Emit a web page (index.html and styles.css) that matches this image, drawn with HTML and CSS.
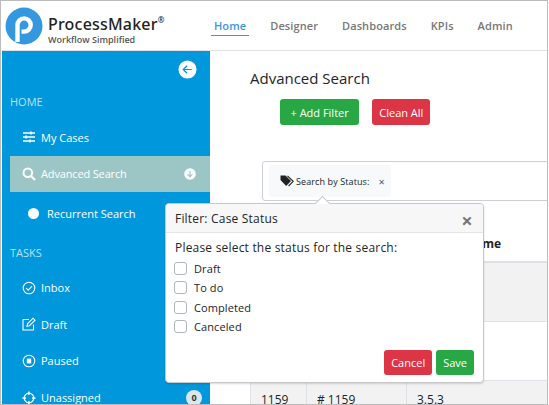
FILE: index.html
```html
<!DOCTYPE html>
<html>
<head>
    <title>Advanced Search</title>
    <link rel="stylesheet" href="styles.css">
</head>
<body>
    <div class="window">
        <header class="topbar">
            <div class="logo">
                <svg class="logo-mark" viewBox="0 0 38 38" width="38" height="38">
                    <circle cx="19" cy="19" r="18.5" fill="#3498e0"/>
                    <path d="M12.5 35 V18 A6.6 6.6 0 1 1 19.1 24.6 H16.5" fill="none" stroke="#fff" stroke-width="4.4"/>
                </svg>
                <div class="logo-text">
                    <div class="logo-name">ProcessMaker<span class="reg">®</span></div>
                    <div class="logo-tag">Workflow Simplified</div>
                </div>
            </div>
            <nav class="nav">
                <a class="nav-link active">Home</a>
                <a class="nav-link">Designer</a>
                <a class="nav-link">Dashboards</a>
                <a class="nav-link">KPIs</a>
                <a class="nav-link">Admin</a>
            </nav>
        </header>
        <div class="content">
            <aside class="sidebar">
                <div class="collapse">
                    <svg viewBox="0 0 20 20" width="19" height="19">
                        <circle cx="10" cy="10" r="9.5" fill="#fff"/>
                        <path d="M14.5 10 H6 M9.5 6 L5.5 10 L9.5 14" fill="none" stroke="#0097dc" stroke-width="1.3"/>
                    </svg>
                </div>
                <div class="side-title first">HOME</div>
                <a class="side-item">
                    <svg class="side-icon" viewBox="0 0 14 14" width="14" height="14">
                        <path d="M1 3 H13 M1 7 H13 M1 11 H13" stroke="#fff" stroke-width="1.3"/>
                        <path d="M9 1.5 V4.5 M4 5.5 V8.5 M8 9.5 V12.5" stroke="#fff" stroke-width="1.6"/>
                    </svg>
                    My Cases
                </a>
                <a class="side-item active">
                    <svg class="side-icon" viewBox="0 0 14 14" width="14" height="14">
                        <circle cx="5.8" cy="5.8" r="4.3" fill="none" stroke="#fff" stroke-width="2"/>
                        <path d="M9 9 L13 13" stroke="#fff" stroke-width="2.2"/>
                    </svg>
                    Advanced Search
                    <svg class="side-arrow" viewBox="0 0 12 12" width="12" height="12">
                        <circle cx="6" cy="6" r="5.8" fill="#fff"/>
                        <path d="M6 3 V8.5 M3.6 6.3 L6 8.7 L8.4 6.3" fill="none" stroke="#9cc6c6" stroke-width="1.1"/>
                    </svg>
                </a>
                <a class="side-item sub">
                    <span class="dot"></span>
                    Recurrent Search
                </a>
                <div class="side-title">TASKS</div>
                <a class="side-item">
                    <svg class="side-icon" viewBox="0 0 14 14" width="14" height="14">
                        <circle cx="7" cy="7" r="5.8" fill="none" stroke="#fff" stroke-width="1.1"/>
                        <path d="M4.2 7.2 L6.2 9.2 L10 5.2" fill="none" stroke="#fff" stroke-width="1.2"/>
                    </svg>
                    Inbox
                </a>
                <a class="side-item">
                    <svg class="side-icon" viewBox="0 0 14 14" width="14" height="14">
                        <path d="M7 2.5 H1 V13 H11.5 V7.5" fill="none" stroke="#fff" stroke-width="1.1"/>
                        <path d="M5 9.2 L5.5 6.8 L11 1.2 L13 3.2 L7.4 8.7 Z" fill="none" stroke="#fff" stroke-width="1.1"/>
                    </svg>
                    Draft
                </a>
                <a class="side-item">
                    <svg class="side-icon" viewBox="0 0 14 14" width="14" height="14">
                        <circle cx="7" cy="7" r="5.8" fill="none" stroke="#fff" stroke-width="1.1"/>
                        <rect x="4.8" y="4.6" width="4.4" height="4.8" fill="#fff"/>
                    </svg>
                    Paused
                </a>
                <a class="side-item">
                    <svg class="side-icon" viewBox="0 0 14 14" width="14" height="14">
                        <circle cx="7" cy="7" r="4.8" fill="none" stroke="#fff" stroke-width="1.3"/>
                        <path d="M7 0.5 V4 M7 10 V13.5 M0.5 7 H4 M10 7 H13.5" stroke="#fff" stroke-width="1.4"/>
                    </svg>
                    Unassigned
                    <span class="badge">0</span>
                </a>
            </aside>
            <main class="main">
                <h1 class="page-title">Advanced Search</h1>
                <div class="actions">
                    <button class="btn green add">+ Add Filter</button>
                    <button class="btn red clean">Clean All</button>
                </div>
                <div class="filter-box">
                    <div class="chip">
                        <svg viewBox="0 0 14 12" width="14" height="12">
                            <path d="M0.5 0.5 H5.5 L11 6 L6.2 11 L0.5 5 Z" fill="#222"/>
                            <path d="M7.5 0.8 L13.2 6.3 L8.6 11" fill="none" stroke="#222" stroke-width="1.1"/>
                        </svg>
                        <span class="chip-label">Search by Status:</span>
                        <span class="chip-x">×</span>
                    </div>
                </div>
                <table class="results">
                    <thead>
                        <tr>
                            <th class="col-a"></th>
                            <th class="col-b"></th>
                            <th>Process Name</th>
                        </tr>
                    </thead>
                    <tbody>
                        <tr class="odd"><td></td><td></td><td></td></tr>
                        <tr><td></td><td></td><td></td></tr>
                        <tr class="odd"><td>1159</td><td># 1159</td><td>3.5.3</td></tr>
                    </tbody>
                </table>
            </main>
        </div>
        <div class="popover">
            <div class="pop-arrow"></div>
            <div class="pop-head">
                <span>Filter: Case Status</span>
                <span class="pop-close">×</span>
            </div>
            <div class="pop-body">
                <p class="pop-text">Please select the status for the search:</p>
                <label class="check"><span class="box"></span>Draft</label>
                <label class="check"><span class="box"></span>To do</label>
                <label class="check"><span class="box"></span>Completed</label>
                <label class="check"><span class="box"></span>Canceled</label>
                <div class="pop-foot">
                    <button class="btn red small">Cancel</button>
                    <button class="btn green small">Save</button>
                </div>
            </div>
        </div>
    </div>
</body>
</html>
```

FILE: styles.css
```css
html, body {
    margin: 0;
    height: 405px;
    overflow: hidden;
    background-color: #fff;
}

body {
    font-family: "Open Sans", "Noto Sans", sans-serif;
    font-size: 11px;
    color: #212529;
}

.window {
    position: relative;
    box-sizing: border-box;
    width: 548px;
    height: 405px;
    border: 1px solid #bcbcbc;
    overflow: hidden;
}

.topbar {
    display: flex;
    height: 49px;
    border-bottom: 1px solid #e1e1e1;
}

.logo {
    display: flex;
    align-items: center;
    gap: 5px;
    width: 209px;
    padding-left: 4px;
    box-sizing: border-box;
}

.logo-mark {
    flex: none;
}

.logo-text {
    margin-top: 8px;
}

.logo-name {
    font-family: "Noto Sans", sans-serif;
    font-size: 16px;
    font-weight: 500;
    line-height: 19px;
    color: #222;
    letter-spacing: 0.2px;
}

.reg {
    display: inline-block;
    font-size: 8px;
    line-height: 10px;
    vertical-align: top;
}

.logo-tag {
    font-size: 9px;
    font-weight: 600;
    line-height: 11px;
    color: #555;
}

.nav {
    display: flex;
    gap: 24px;
    padding-left: 4px;
    font-size: 11px;
    font-weight: 600;
    color: #777;
}

.nav-link {
    display: block;
    height: 16px;
    margin-top: 17px;
    line-height: 16px;
    letter-spacing: 0.1px;
}

.nav-link.active {
    height: 17px;
    margin: 17px -3px 0;
    padding: 0 3px;
    color: #3d96e0;
    border-bottom: 1px solid #3d96e0;
}

.content {
    display: flex;
    height: 353px;
    padding-left: 1px;
}

.sidebar {
    flex: none;
    width: 208px;
    height: 353px;
    background-color: #0097dc;
    color: #fff;
    overflow: hidden;
}

.collapse {
    display: flex;
    justify-content: flex-end;
    padding: 9px 13px 0 0;
    height: 20px;
}

.side-title {
    margin: 9px 8px 6px;
    height: 20px;
    line-height: 20px;
    font-size: 11px;
    color: #b5e3f7;
}

.side-title.first {
    margin: 12px 8px 7px;
}

.side-item {
    display: flex;
    align-items: center;
    height: 36.7px;
    margin-left: 8px;
    padding-left: 12px;
    font-size: 11px;
}

.side-icon {
    flex: none;
    margin-right: 5px;
}

.side-item.active {
    height: 36.5px;
    background-color: #9cc6c6;
    letter-spacing: -0.15px;
}

.side-item.sub {
    padding-left: 18px;
    height: 42px;
}

.side-arrow {
    margin-left: auto;
    margin-right: 14px;
}

.dot {
    width: 11px;
    height: 11px;
    margin-right: 8px;
    border-radius: 50%;
    background-color: #fff;
}

.badge {
    display: flex;
    align-items: center;
    justify-content: center;
    width: 16px;
    height: 16px;
    margin-left: auto;
    margin-right: 8px;
    border-radius: 50%;
    background-color: #dbe7ee;
    color: #333;
    font-size: 9px;
    font-weight: 700;
}

.main {
    flex: 1;
    min-width: 0;
    overflow: hidden;
    padding-left: 40px;
}

.page-title {
    margin: 16px 0 0;
    font-size: 15px;
    font-weight: 400;
    line-height: 22px;
    color: #212529;
}

.actions {
    display: flex;
    gap: 13px;
    margin: 10px 0 0 30px;
}

.btn {
    height: 26px;
    padding: 0 11px;
    border: none;
    border-radius: 3px;
    font-family: inherit;
    font-size: 11px;
    color: #fff;
}

.btn.green {
    background-color: #28a745;
}

.btn.red {
    background-color: #dc3545;
}

.btn.add {
    padding: 0 10.5px;
}

.btn.clean {
    padding: 0 7px;
}

.btn.small {
    height: 25px;
    padding: 0 7px;
}

.filter-box {
    box-sizing: border-box;
    width: 300px;
    height: 40px;
    margin: 36px 0 0 12px;
    padding: 3px 6px;
    border: 1px solid #ccd0d4;
    border-radius: 3px;
}

.chip {
    display: inline-flex;
    align-items: center;
    gap: 2px;
    height: 32px;
    padding: 0 6px 0 11px;
    border-radius: 3px;
    background-color: #f8f9fa;
    font-size: 9px;
}

.chip-label {
    letter-spacing: 0.1px;
}

.chip-x {
    margin-left: 7px;
    color: #555;
    font-size: 11px;
}

.results {
    width: 340px;
    margin-top: 2px;
    border-collapse: collapse;
    table-layout: fixed;
    font-size: 12px;
}

.results th {
    box-sizing: border-box;
    height: 59px;
    padding: 0 0 4px 10px;
    border-bottom: 2px solid #dee2e6;
    text-align: left;
    vertical-align: bottom;
    font-size: 12px;
    line-height: 26px;
}

.results td {
    box-sizing: border-box;
    height: 59px;
    padding: 9px 10px 0;
    border-top: 1px solid #dee2e6;
    border-left: 1px solid #dee2e6;
    vertical-align: top;
    line-height: 20px;
}

.results .odd td {
    background-color: #f2f2f2;
}

.col-a {
    width: 56px;
}

.col-b {
    width: 100px;
}

.popover {
    position: absolute;
    left: 164px;
    top: 202px;
    box-sizing: border-box;
    width: 319px;
    height: 180px;
    border: 1px solid #c8c8c8;
    border-radius: 4px;
    background-color: #fff;
    box-shadow: 0 1px 2px rgba(0, 0, 0, 0.15);
}

.pop-arrow {
    position: absolute;
    left: 151px;
    top: -6px;
    width: 10px;
    height: 10px;
    border-left: 1px solid #c8c8c8;
    border-top: 1px solid #c8c8c8;
    background-color: #fff;
    transform: rotate(45deg);
}

.pop-head {
    position: relative;
    display: flex;
    justify-content: space-between;
    align-items: center;
    height: 28px;
    padding: 0 10px 0 9px;
    border-bottom: 1px solid #e5e5e5;
    border-radius: 4px 4px 0 0;
    background-color: #f7f7f7;
    font-size: 12px;
    letter-spacing: 0.2px;
}

.pop-close {
    font-size: 20px;
    font-weight: 700;
    color: #777;
    line-height: 20px;
    padding-top: 5px;
}

.pop-body {
    padding: 6px 9px 0;
}

.pop-text {
    margin: 0 0 2px;
    font-size: 12px;
    line-height: 18px;
    letter-spacing: 0.2px;
}

.check {
    display: flex;
    align-items: center;
    height: 19.3px;
    font-size: 11px;
    letter-spacing: 0.1px;
}

.box {
    box-sizing: border-box;
    width: 13px;
    height: 13px;
    margin: 0 7px 0 -1px;
    border: 1px solid #adb5bd;
    border-radius: 3px;
    background-color: #fff;
}

.pop-foot {
    display: flex;
    justify-content: flex-end;
    gap: 4px;
    margin-top: 14px;
}
```
